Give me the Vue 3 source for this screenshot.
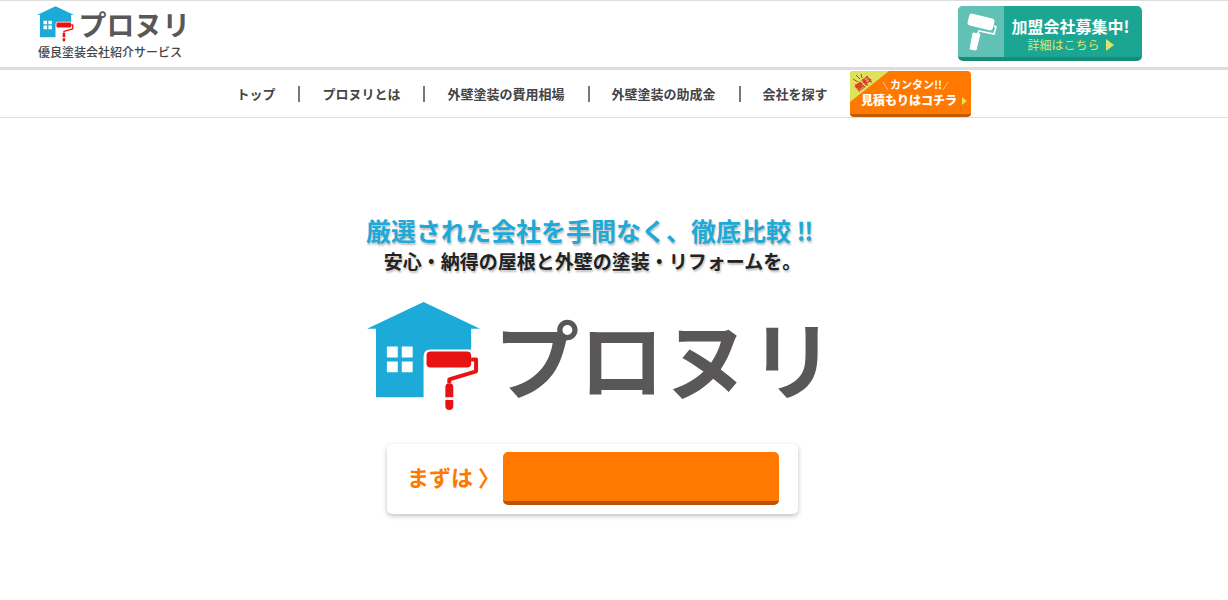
<script setup>
const links = ['トップ', 'プロヌリとは', '外壁塗装の費用相場', '外壁塗装の助成金', '会社を探す']
</script>

<template>
  <div class="page">
    <header class="header">
      <a class="brand" href="#" aria-label="プロヌリ">
        <svg class="brand-logo" viewBox="0 0 456 110" aria-hidden="true">
          <use href="#house" />
          <text class="logo-text" x="128" y="92">プロヌリ</text>
        </svg>
        <span class="tagline">優良塗装会社紹介サービス</span>
      </a>
      <a class="join" href="#">
        <span class="join-icon">
          <svg viewBox="0 0 46 52" aria-hidden="true">
            <rect x="10" y="10" width="26" height="12" rx="3" transform="rotate(14 23 16)" fill="#fff" />
            <path d="M36 20l2 1-2 7-15-3-2 4" fill="none" stroke="#fff" stroke-width="1.6" />
            <path d="M15 27l7 1-4 16-6-1z" fill="#fff" stroke="#fff" stroke-linejoin="round" />
          </svg>
        </span>
        <span class="join-copy">
          <strong>加盟会社募集中!</strong>
          <span class="join-more">詳細はこちら
            <svg viewBox="0 0 8 12" aria-hidden="true"><path d="M0 0l8 6-8 6z" fill="#dfe566" /></svg>
          </span>
        </span>
      </a>
    </header>

    <nav class="nav">
      <ul class="nav-list">
        <li v-for="link in links" :key="link"><a href="#">{{ link }}</a></li>
      </ul>
      <a class="estimate" href="#">
        <svg viewBox="0 0 121 46" role="img" aria-label="無料 カンタン!! 見積もりはコチラ">
          <path d="M0 0H39L0 31z" fill="#dde25c" />
          <g stroke="#d8372b" stroke-width="1">
            <path d="M3 8l5 3M6 4l4 4M11 3l1 4" />
          </g>
          <text class="free" x="13" y="16" text-anchor="middle" transform="rotate(-38 13 12)">無料</text>
          <path d="M33 11l5 8M98 11l-5 8" stroke="#ffc48f" stroke-width="1" />
          <text class="easy" x="40" y="18">カンタン!!</text>
          <text class="quote" x="11" y="34">見積もりはコチラ</text>
          <path d="M112 26l5 4-5 4z" fill="#e5df5a" />
        </svg>
      </a>
    </nav>

    <main class="hero">
      <h1>厳選された会社を手間なく、徹底比較<span class="bang">‼</span></h1>
      <p class="lead">安心・納得の屋根と外壁の塗装・リフォームを。</p>
      <svg class="hero-logo" viewBox="0 0 456 110" role="img" aria-label="プロヌリ">
        <g id="house">
          <path d="M0 27L57 0l57 27h-9v21H64q-7 0-7 7v41H9V27z" fill="#1caad9" />
          <path d="M20 45h11v11H20zM35 45h11v11H35zM20 60h11v11H20zM35 60h11v11H35z" fill="#fff" />
          <rect x="60" y="50" width="45" height="16" rx="4" fill="#e71212" />
          <path d="M105 58h5v12L83 78v4" fill="none" stroke="#e71212" stroke-width="4" stroke-linejoin="round" />
          <path d="M79 96V86q0-4 4-4t4 4v10zM79 99h8v6q0 4-4 4t-4-4z" fill="#e71212" />
        </g>
        <text class="logo-text" x="128" y="92">プロヌリ</text>
      </svg>
      <div class="start">
        <span class="start-label">まずは 〉</span>
        <button type="button" class="start-button" aria-label="まずは"></button>
      </div>
    </main>
  </div>
</template>

<style>
body {
  margin: 0;
  background: #fff;
}
</style>

<style scoped>
.page {
  font-family: "Noto Sans CJK JP", sans-serif;
  color: #444;
}
a {
  color: inherit;
  text-decoration: none;
}
svg {
  display: block;
}
.header {
  box-sizing: border-box;
  display: flex;
  justify-content: space-between;
  align-items: flex-start;
  height: 70px;
  padding: 5px 86px 0 37px;
  border-top: 1px solid #ddd;
  border-bottom: 3px solid #ddd;
}
.brand-logo {
  width: 148px;
  height: 36px;
  overflow: visible;
}
.logo-text {
  font-size: 86px;
  font-weight: 700;
  fill: #595758;
}
.tagline {
  display: block;
  padding-left: 1px;
  font-size: 12px;
  font-weight: 500;
  line-height: 20px;
}
.join {
  box-sizing: border-box;
  display: flex;
  width: 184px;
  height: 55px;
  overflow: hidden;
  border-radius: 5px;
  border-bottom: 4px solid #188c7b;
  background: #1ba693;
}
.join-icon {
  width: 46px;
  background: #60c1b4;
}
.join-copy {
  flex: 1;
  display: flex;
  flex-direction: column;
  align-items: center;
  padding: 9px 5px 0 0;
}
.join strong {
  font-size: 16px;
  line-height: 22px;
  color: #fff;
  white-space: nowrap;
}
.join-more {
  display: flex;
  align-items: center;
  gap: 6px;
  font-size: 12px;
  line-height: 16px;
  color: #dfe566;
}
.join-more svg {
  width: 8px;
  height: 12px;
}
.nav {
  display: flex;
  justify-content: center;
  align-items: center;
  gap: 22px;
  height: 47px;
  padding-right: 21px;
  border-bottom: 1px solid #ddd;
}
.nav-list {
  display: flex;
  margin: 0;
  padding: 0;
  list-style: none;
  font-size: 13px;
  font-weight: 700;
  line-height: 17px;
}
.nav-list li + li {
  margin-left: 23px;
  padding-left: 22px;
  border-left: 2px solid #777;
}
.nav-list a {
  display: block;
  margin-top: -1px;
}
.estimate {
  box-sizing: border-box;
  width: 121px;
  height: 46px;
  overflow: hidden;
  border-radius: 4px;
  border-bottom: 3px solid #c25a00;
  background: #ff7800;
}
.estimate svg {
  width: 121px;
  height: 46px;
}
.free {
  font-size: 9px;
  font-weight: 900;
  fill: #d8372b;
}
.easy {
  font-size: 11px;
  font-weight: 700;
  fill: #fff;
}
.quote {
  font-size: 12px;
  font-weight: 900;
  fill: #fff;
}
.hero {
  display: flex;
  flex-direction: column;
  align-items: center;
  padding: 95px 43px 48px 0;
}
h1,
.lead {
  margin: 0;
  font-weight: 700;
  white-space: nowrap;
  text-shadow: 1px 2px 2px rgba(0, 0, 0, 0.25);
}
h1 {
  font-size: 25px;
  line-height: 34px;
  color: #1caad9;
}
.bang {
  display: inline-block;
  width: 28px;
  text-align: center;
}
.lead {
  font-size: 19px;
  line-height: 28px;
  color: #222;
}
.hero-logo {
  width: 452px;
  height: 109px;
  margin-top: 27px;
  overflow: visible;
}
.start {
  box-sizing: border-box;
  display: flex;
  align-items: center;
  justify-content: space-between;
  width: 411px;
  margin-top: 33px;
  padding: 8px 19px 9px 20px;
  border-radius: 5px;
  background: #fff;
  box-shadow: 0 2px 5px rgba(0, 0, 0, 0.25);
}
.start-label {
  padding-bottom: 6px;
  font-size: 22px;
  font-weight: 700;
  line-height: 32px;
  color: #ff7800;
  white-space: nowrap;
}
.start-button {
  width: 276px;
  height: 53px;
  padding: 0;
  border: 0;
  border-bottom: 4px solid #b95400;
  border-radius: 5px;
  background: #ff7800;
}
</style>
